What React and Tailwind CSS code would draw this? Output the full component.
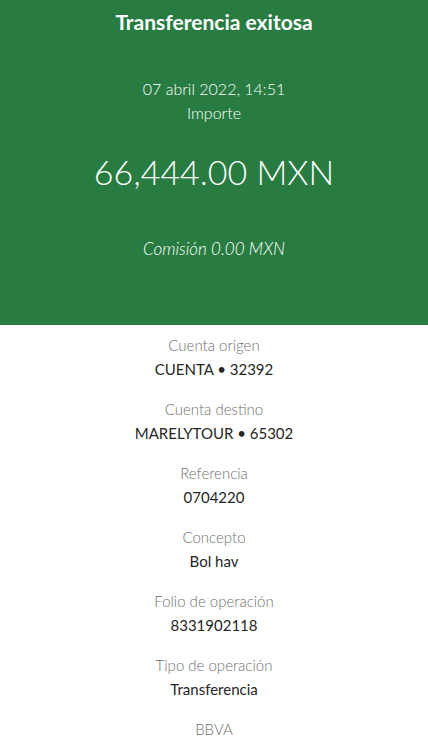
import React from 'react';

const details = [
    { label: 'Cuenta origen', value: 'CUENTA • 32392' },
    { label: 'Cuenta destino', value: 'MARELYTOUR • 65302' },
    { label: 'Referencia', value: '0704220' },
    { label: 'Concepto', value: 'Bol hav' },
    { label: 'Folio de operación', value: '8331902118' },
    { label: 'Tipo de operación', value: 'Transferencia' },
];

const App = () => {
    return (
        <div className="w-[428px] h-[749px] overflow-hidden bg-white font-['Lato',sans-serif]">
            {/* Green header */}
            <div className="h-[325px] bg-[#287c41] text-white text-center flex flex-col items-center">
                <h1 className="mt-[8px] text-[21px] leading-[28px] font-bold">Transferencia exitosa</h1>
                <p className="mt-[41px] text-[16px] leading-[24px] font-light">07 abril 2022, 14:51</p>
                <p className="text-[16px] leading-[24px] font-light">Importe</p>
                <p className="mt-[25px] text-[34px] leading-[44px] font-light">66,444.00 MXN</p>
                <p className="mt-[43px] text-[17px] leading-[24px] font-light italic">Comisión 0.00 MXN</p>
            </div>

            {/* Details */}
            <div className="flex flex-col items-center text-center pt-[8px]">
                {details.map((d, i) => (
                    <div key={i} className="mb-[16px]">
                        <p className="text-[15px] leading-[24px] text-[#707070] font-light">{d.label}</p>
                        <p className="text-[15px] leading-[24px] text-[#262626]">{d.value}</p>
                    </div>
                ))}
                <p className="text-[15px] leading-[24px] text-[#707070] font-light">BBVA</p>
            </div>
        </div>
    );
};

export default App;
